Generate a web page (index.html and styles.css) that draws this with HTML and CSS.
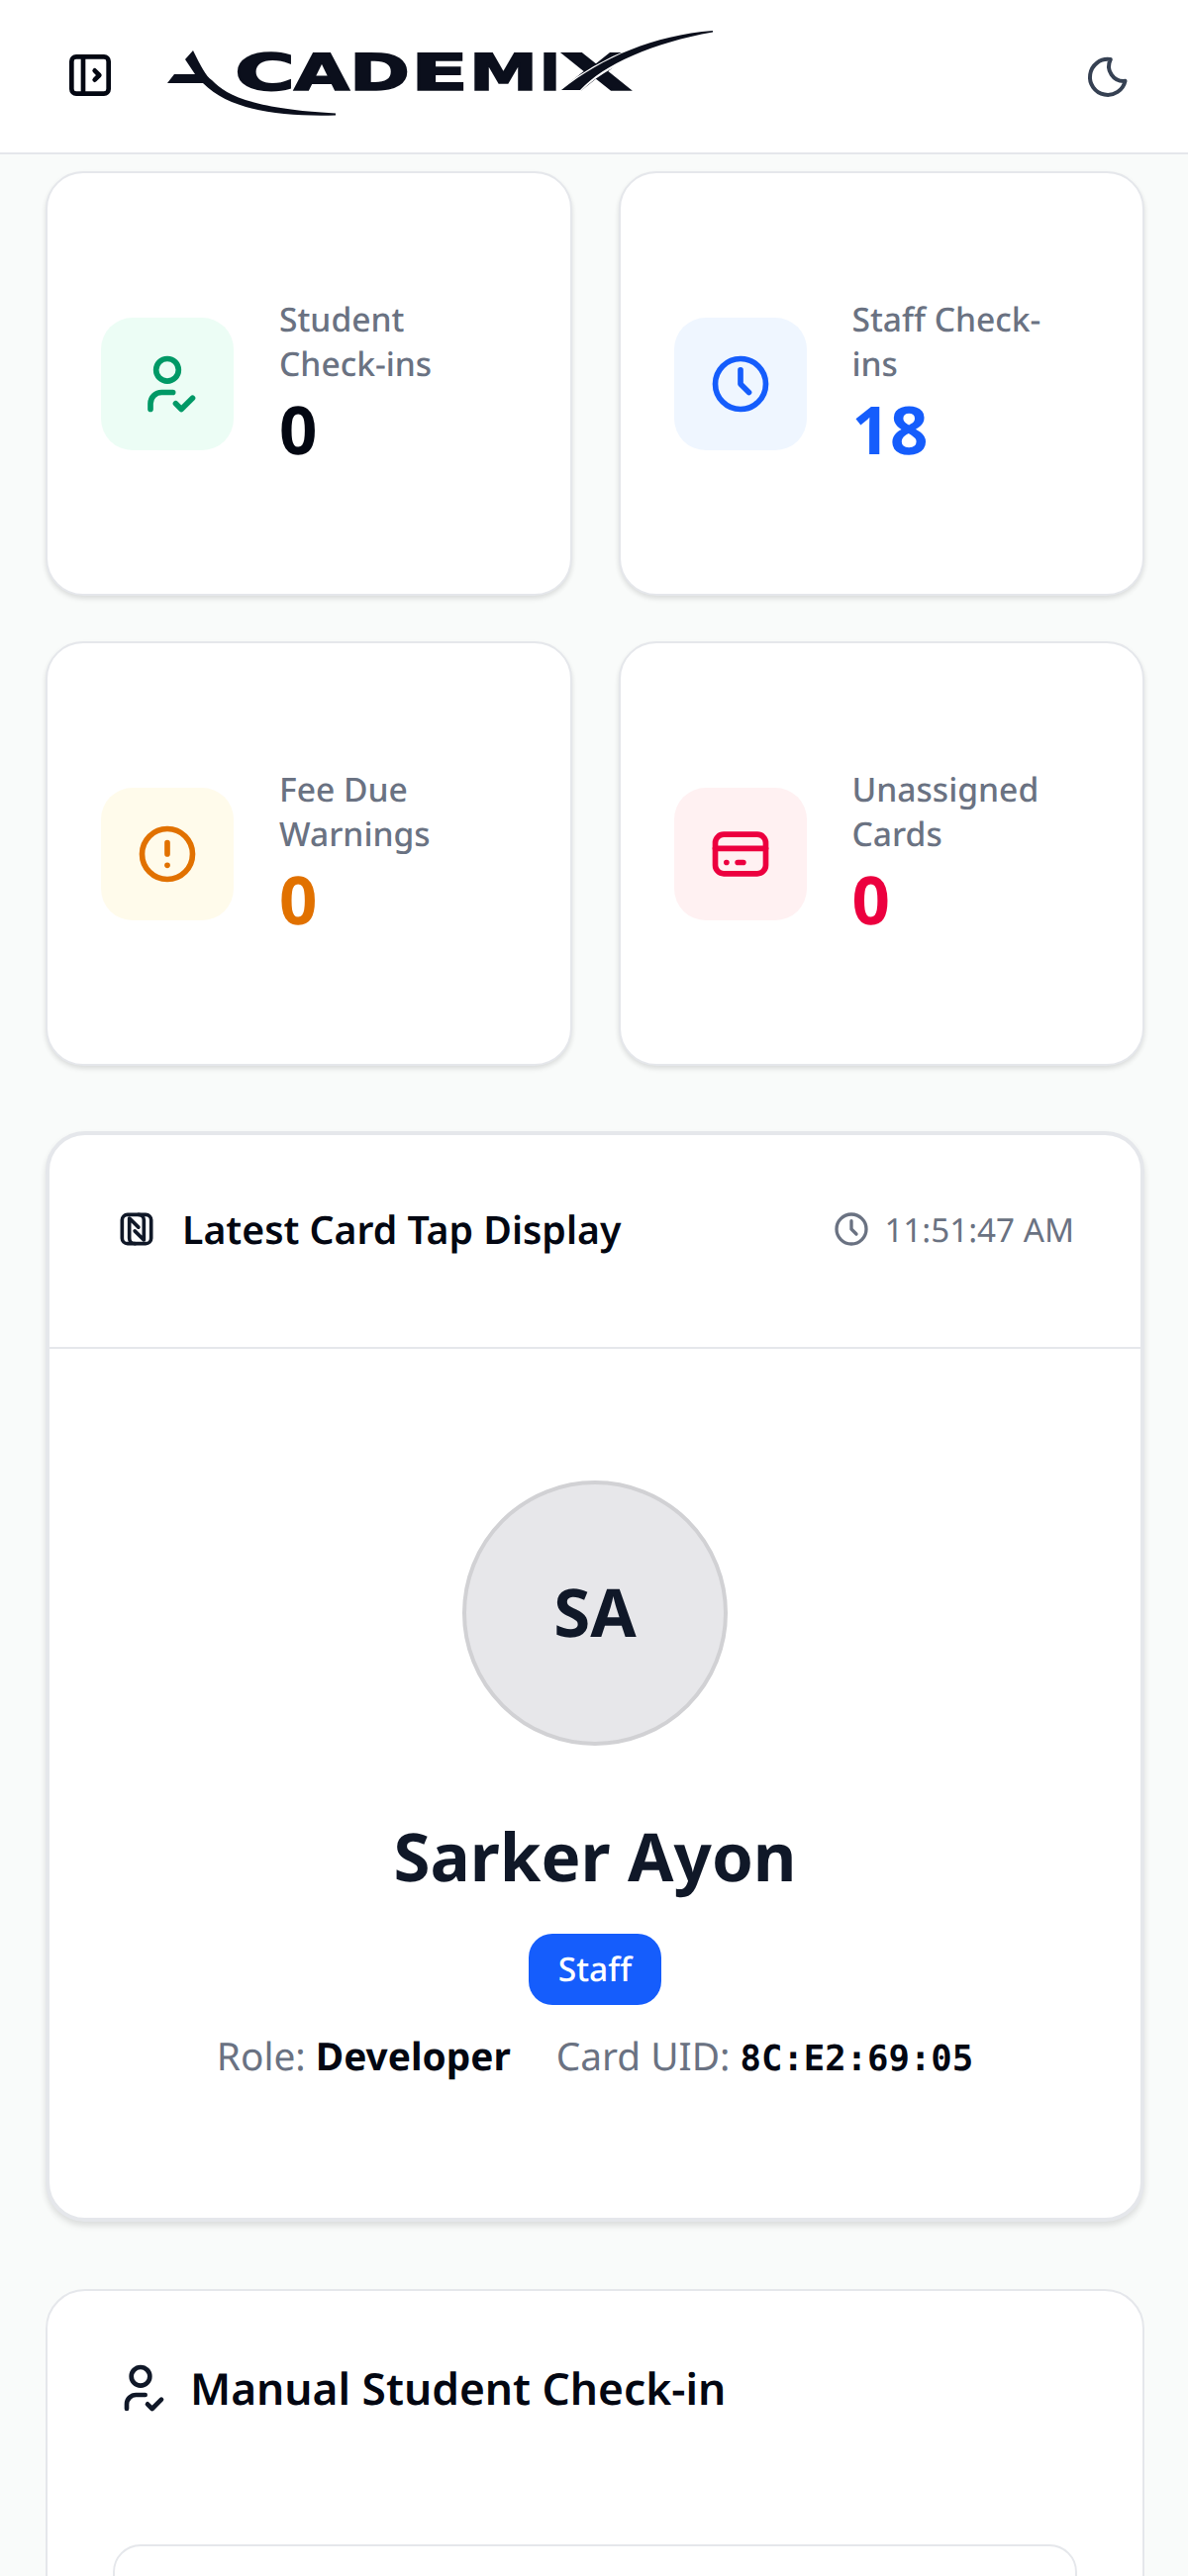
FILE: index.html
```html
<!DOCTYPE html>
<html lang="en">
<head>
	<meta charset="UTF-8">
	<title>Academix Dashboard</title>
	<meta name="viewport" content="width=device-width, initial-scale=1">
	<link rel="stylesheet" href="styles.css">
</head>
<body>
	<header class="topbar">
		<div class="topbar-left">
			<svg class="ico ico-sidebar" viewBox="0 0 24 24"><path d="M4 6a2 2 0 0 1 2 -2h12a2 2 0 0 1 2 2v12a2 2 0 0 1 -2 2h-12a2 2 0 0 1 -2 -2z"/><path d="M9 4v16"/><path d="M14 10l2 2l-2 2"/></svg>
			<svg class="logo" viewBox="165 27 560 100" role="img" aria-label="Academix">
				<path d="M195 52 C203 68 208 78 214 82 C228 97 255 111 339 115.5 L339 117.5 C280 119 232 112 205 85 L169 85 L176 76 L197 76 L187 61 Z"/>
				<g class="logo-text">
					<text x="237" y="91.5" textLength="61" lengthAdjust="spacingAndGlyphs">C</text>
					<text x="297" y="91.5" textLength="56" lengthAdjust="spacingAndGlyphs">A</text>
					<text x="353" y="91.5" textLength="61" lengthAdjust="spacingAndGlyphs">D</text>
					<text x="415" y="91.5" textLength="58" lengthAdjust="spacingAndGlyphs">E</text>
					<text x="474" y="91.5" textLength="69" lengthAdjust="spacingAndGlyphs">M</text>
					<text x="545" y="91.5" textLength="21" lengthAdjust="spacingAndGlyphs">I</text>
					<text x="566" y="91.5" textLength="72" lengthAdjust="spacingAndGlyphs">X</text>
				</g>
				<path class="logo-gap" d="M720 32 C660 38 610 58 567 92 L586 92 C610 68 660 44 720 33 Z"/>
				<path d="M720 32 C660 37 610 58 567 92 L586 92 C610 66 660 44 720 33.5 Z"/>
			</svg>
		</div>
		<svg class="ico ico-moon" viewBox="0 0 24 24"><path d="M12 3c.132 0 .263 0 .393 0a7.5 7.5 0 0 0 7.37 10.928a9 9 0 1 1 -7.763 -10.928z"/></svg>
	</header>

	<main class="content">
		<section class="stats">
			<div class="stat">
				<div class="stat-icon tone-green">
					<svg class="ico" viewBox="0 0 24 24"><path d="M8 7a4 4 0 1 0 8 0a4 4 0 0 0 -8 0"/><path d="M6 21v-2a4 4 0 0 1 4 -4h4"/><path d="M15 19l2 2l4 -4"/></svg>
				</div>
				<div class="stat-text">
					<p class="stat-label">Student Check-ins</p>
					<p class="stat-value">0</p>
				</div>
			</div>
			<div class="stat">
				<div class="stat-icon tone-blue">
					<svg class="ico" viewBox="0 0 24 24"><path d="M3 12a9 9 0 1 0 18 0a9 9 0 0 0 -18 0"/><path d="M12 7v5l3 3"/></svg>
				</div>
				<div class="stat-text">
					<p class="stat-label">Staff Check-ins</p>
					<p class="stat-value tone-blue">18</p>
				</div>
			</div>
			<div class="stat">
				<div class="stat-icon tone-amber">
					<svg class="ico" viewBox="0 0 24 24"><path d="M3 12a9 9 0 1 0 18 0a9 9 0 0 0 -18 0"/><path d="M12 8v4"/><path d="M12 16h.01"/></svg>
				</div>
				<div class="stat-text">
					<p class="stat-label">Fee Due Warnings</p>
					<p class="stat-value tone-amber">0</p>
				</div>
			</div>
			<div class="stat">
				<div class="stat-icon tone-rose">
					<svg class="ico" viewBox="0 0 24 24"><path d="M3 8a3 3 0 0 1 3 -3h12a3 3 0 0 1 3 3v8a3 3 0 0 1 -3 3h-12a3 3 0 0 1 -3 -3z"/><path d="M3 10l18 0"/><path d="M7 15l.01 0"/><path d="M11 15l2 0"/></svg>
				</div>
				<div class="stat-text">
					<p class="stat-label">Unassigned Cards</p>
					<p class="stat-value tone-rose">0</p>
				</div>
			</div>
		</section>

		<section class="tap-card">
			<div class="tap-head">
				<h2 class="tap-title">
					<svg class="ico ico-nfc" viewBox="0 0 24 24"><path d="M11 20a3 3 0 0 1 -3 -3v-11l5 5"/><path d="M13 4a3 3 0 0 1 3 3v11l-5 -5"/><path d="M4 7a3 3 0 0 1 3 -3h10a3 3 0 0 1 3 3v10a3 3 0 0 1 -3 3h-10a3 3 0 0 1 -3 -3z"/></svg>
					Latest Card Tap Display
				</h2>
				<span class="tap-time">
					<svg class="ico ico-time" viewBox="0 0 24 24"><path d="M3 12a9 9 0 1 0 18 0a9 9 0 0 0 -18 0"/><path d="M12 7v5l3 3"/></svg>
					11:51:47 AM
				</span>
			</div>
			<div class="tap-body">
				<div class="avatar">SA</div>
				<h3 class="tap-name">Sarker Ayon</h3>
				<span class="badge">Staff</span>
				<div class="tap-meta">
					<span>Role: <strong>Developer</strong></span>
					<span>Card UID: <code>8C:E2:69:05</code></span>
				</div>
			</div>
		</section>

		<section class="manual-card">
			<h2 class="manual-title">
				<svg class="ico ico-manual" viewBox="0 0 24 24"><path d="M8 7a4 4 0 1 0 8 0a4 4 0 0 0 -8 0"/><path d="M6 21v-2a4 4 0 0 1 4 -4h4"/><path d="M15 19l2 2l4 -4"/></svg>
				Manual Student Check-in
			</h2>
			<div class="manual-box"></div>
		</section>
	</main>
</body>
</html>
```

FILE: styles.css
```css
* { box-sizing: border-box; }
html, body { height: 2603px; overflow: hidden; }
body { margin: 0; background: #f9fbfa; color: #030712; font-family: "Noto Sans", "Open Sans", sans-serif; text-rendering: geometricPrecision; }
p, h2, h3 { margin: 0; }

.ico { display: block; flex: none; width: 68px; height: 68px; fill: none; stroke: currentColor; stroke-width: 2; stroke-linecap: round; stroke-linejoin: round; }

/* top bar */
.topbar { display: flex; align-items: center; justify-content: space-between; height: 156px; padding: 0 55px 2px 63px; background: #fff; border-bottom: 2px solid #e5e7eb; }
.topbar-left { display: flex; align-items: center; gap: 46px; }
.ico-sidebar { width: 56px; height: 56px; }
.ico-moon { width: 48px; height: 48px; margin-top: 4px; color: #364153; }
.logo { display: block; width: 560px; height: 100px; fill: #0b0f1c; }
.logo-text { font-family: "DejaVu Sans", sans-serif; font-weight: 700; font-size: 51px; stroke: #0b0f1c; stroke-width: 1.6; }
.logo-gap { fill: none; stroke: #fff; stroke-width: 3; }

.content { padding: 17px 44px 0 46px; }

/* stat cards */
.stats { display: grid; grid-template-columns: 1fr 1fr; gap: 46px 47px; }
.stat { display: flex; align-items: center; gap: 46px; height: 429px; padding: 0 62px 0 54px; background: #fff; border: 2px solid #e5e7eb; border-radius: 38px; box-shadow: 0 3px 5px rgba(0,0,0,0.12); }
.stat-icon { display: flex; align-items: center; justify-content: center; flex: none; width: 134px; height: 134px; border-radius: 32px; }
.stat-label { font-size: 33.6px; line-height: 45px; color: #6a7282; font-weight: 500; }
.stat-value { font-size: 67.2px; line-height: 86px; font-weight: 700; }
.stat-icon.tone-green { background: #ecfdf5; color: #009966; }
.stat-icon.tone-blue { background: #eff6ff; color: #155dfc; }
.stat-icon.tone-amber { background: #fffbeb; color: #e17100; }
.stat-icon.tone-rose { background: #fff1f2; color: #ec003f; }
.stat-value.tone-blue { color: #155dfc; }
.stat-value.tone-amber { color: #e17100; }
.stat-value.tone-rose { color: #ec003f; }

/* latest tap */
.tap-card { height: 1102px; margin-top: 66px; background: #fff; border: 4px solid #e5e7eb; border-radius: 40px; box-shadow: 0 4px 6px rgba(0,0,0,0.12); }
.tap-head { display: flex; align-items: center; justify-content: space-between; height: 216px; padding: 0 67px 24px 66px; border-bottom: 2px solid #e5e7eb; }
.tap-title { display: flex; align-items: center; gap: 24px; font-size: 39.2px; font-weight: 600; }
.ico-nfc { width: 44px; height: 44px; color: #101828; }
.tap-time { display: flex; align-items: center; gap: 13px; font-size: 33.2px; color: #6a7282; }
.ico-time { width: 40px; height: 40px; }
.tap-body { display: flex; flex-direction: column; align-items: center; padding-top: 133px; }
.avatar { display: flex; align-items: center; justify-content: center; width: 268px; height: 268px; padding-bottom: 5px; border: 4px solid #d1d1d4; border-radius: 50%; background: #e7e7ea; color: #101828; font-size: 67.2px; font-weight: 700; }
.tap-name { margin-top: 65px; font-size: 67.2px; line-height: 92px; font-weight: 700; color: #101828; }
.badge { margin-top: 33px; padding: 0 30px; height: 72px; line-height: 70px; border-radius: 24px; background: #155dfc; color: #fff; font-size: 33.6px; font-weight: 500; }
.tap-meta { display: flex; gap: 46px; margin-top: 27px; font-size: 38.8px; line-height: 50px; color: #6a7282; }
.tap-meta strong { color: #030712; font-weight: 700; }
.tap-meta code { color: #030712; font-family: "DejaVu Sans Mono", monospace; font-size: 35.6px; font-weight: 700; }

/* manual check-in */
.manual-card { height: 400px; margin-top: 68px; padding: 62px 66px 0; background: #fff; border: 2px solid #e5e7eb; border-radius: 40px; }
.manual-title { display: flex; align-items: center; gap: 22px; height: 72px; font-size: 44.3px; font-weight: 600; }
.ico-manual { width: 56px; height: 56px; color: #101828; }
.manual-box { height: 200px; margin-top: 122px; background: #fff; border: 2px solid #e5e7eb; border-radius: 28px; }
```
